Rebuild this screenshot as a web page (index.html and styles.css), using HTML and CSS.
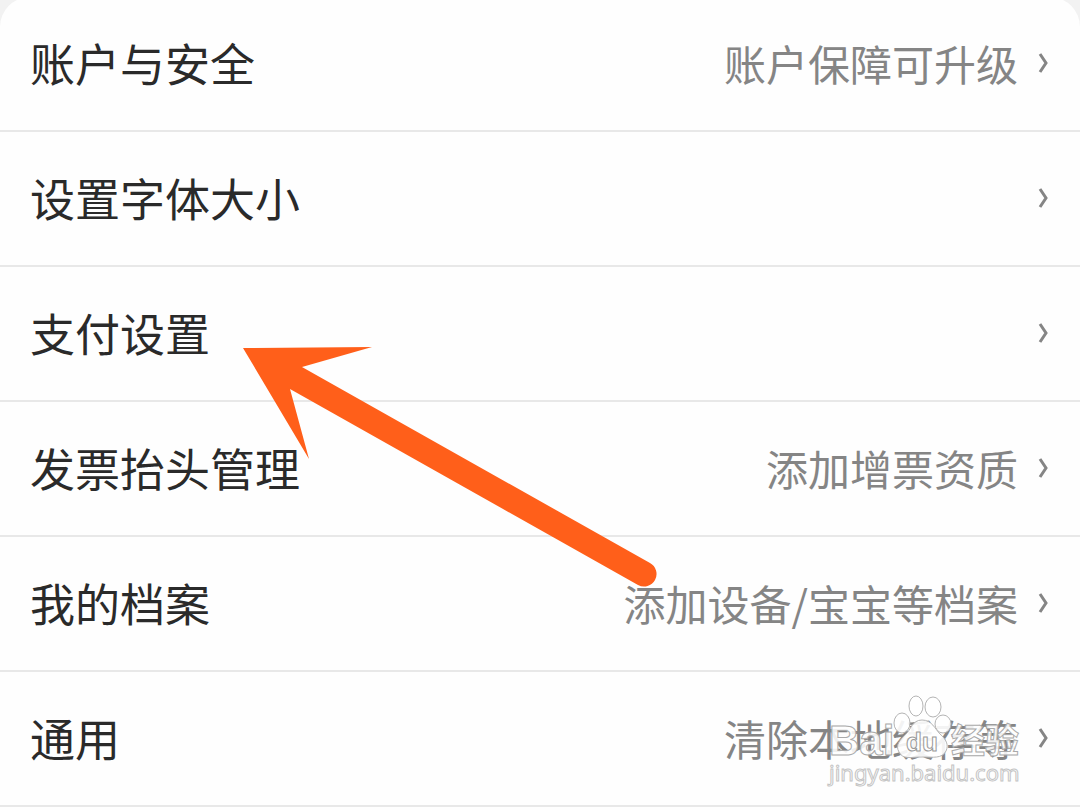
FILE: index.html
```html
<!DOCTYPE html>
<html lang="zh-CN">

<head>
	<meta charset="UTF-8">
	<meta name="viewport" content="width=device-width, initial-scale=1.0">
	<title>账户设置</title>
	<link rel="stylesheet" href="styles.css">
</head>

<body>
	<div class="main">
		<ul class="settings">
			<li>
				<a href="#">
					<span class="name">账户与安全</span>
					<span class="tip">账户保障可升级</span>
					<svg class="more" viewBox="0 0 10 22"><path d="M2 2L8 11L2 20"/></svg>
				</a>
			</li>
			<li>
				<a href="#">
					<span class="name">设置字体大小</span>
					<svg class="more" viewBox="0 0 10 22"><path d="M2 2L8 11L2 20"/></svg>
				</a>
			</li>
			<li>
				<a href="#">
					<span class="name">支付设置</span>
					<svg class="more" viewBox="0 0 10 22"><path d="M2 2L8 11L2 20"/></svg>
				</a>
			</li>
			<li>
				<a href="#">
					<span class="name">发票抬头管理</span>
					<span class="tip">添加增票资质</span>
					<svg class="more" viewBox="0 0 10 22"><path d="M2 2L8 11L2 20"/></svg>
				</a>
			</li>
			<li>
				<a href="#">
					<span class="name">我的档案</span>
					<span class="tip">添加设备/宝宝等档案</span>
					<svg class="more" viewBox="0 0 10 22"><path d="M2 2L8 11L2 20"/></svg>
				</a>
			</li>
			<li>
				<a href="#">
					<span class="name">通用</span>
					<span class="tip">清除本地缓存等</span>
					<svg class="more" viewBox="0 0 10 22"><path d="M2 2L8 11L2 20"/></svg>
				</a>
			</li>
		</ul>

		<!-- 指向支付设置的箭头 -->
		<svg class="arrow" viewBox="0 0 414 240">
			<path d="M0 1L129 0L59 20L407 216A12 12 0 0 1 395 238L47 42L66 112Z"/>
		</svg>

		<!-- 水印 -->
		<svg class="watermark" viewBox="0 0 200 100">
			<text class="brand" x="3" y="70">Bai</text>
			<text class="cn" x="125" y="68">经验</text>
			<g class="paw">
				<ellipse cx="76" cy="38" rx="8" ry="10"/>
				<ellipse cx="90" cy="21" rx="7" ry="10"/>
				<ellipse cx="107" cy="22" rx="8" ry="10"/>
				<ellipse cx="117" cy="39" rx="8" ry="9"/>
				<path d="M96 35C106 35 109 44 114 49C120 54 123 60 120 66C116 74 107 72 96 72C85 72 77 75 73 67C69 60 74 55 79 50C85 45 86 35 96 35Z"/>
			</g>
			<text class="du" x="80" y="66">du</text>
			<text class="url" x="3" y="96">jingyan.baidu.com</text>
		</svg>
	</div>
</body>

</html>
```
FILE: styles.css
```css
* {
	margin: 0;
	padding: 0;
	box-sizing: border-box;
}

body {
	background: #f2f2f2;
	font-family: "Noto Sans CJK SC", sans-serif;
}

li {
	list-style: none;
}

.main {
	position: relative;
	min-height: 100vh;
	overflow: hidden;
}

.settings {
	min-height: 100vh;
	margin-top: -3px;
	margin-bottom: -4px;
	padding-bottom: 8px;
	border-radius: 30px 30px 0 0;
	background: #fefefe;
}

.settings li {
	border-bottom: 2px solid #e8e8e8;
}

.settings a {
	display: flex;
	align-items: center;
	height: 133px;
	padding: 0 32px 2px 30px;
	text-decoration: none;
}

.settings .name {
	flex: 1;
	font-size: 45px;
	color: #2a2a2a;
}

.settings .tip {
	font-size: 42px;
	color: #858585;
}

.settings .more {
	width: 10px;
	height: 22px;
	margin-left: 20px;
	fill: none;
	stroke: #858585;
	stroke-width: 3;
}

.arrow {
	position: absolute;
	top: 347px;
	left: 243px;
	width: 414px;
	height: 240px;
	fill: #ff5f1a;
}

.watermark {
	position: absolute;
	right: 54px;
	bottom: 26px;
	width: 200px;
	height: 100px;
	overflow: visible;
	fill: rgba(255, 255, 255, 0.9);
	stroke: #c4c4c4;
	stroke-width: 1;
}

.watermark text {
	font-family: "Liberation Sans", "Noto Sans CJK SC", sans-serif;
}

.watermark .brand {
	font-size: 42px;
	font-weight: bold;
	stroke: #aaa;
}

.watermark .cn {
	font-size: 34px;
	font-weight: bold;
	stroke: #aaa;
}

.watermark .paw {
	stroke: #b4b4b4;
}

.watermark .du {
	font-size: 26px;
	font-weight: bold;
	stroke: #999;
}

.watermark .url {
	font-family: "Noto Sans", sans-serif;
	font-size: 22px;
}
```
